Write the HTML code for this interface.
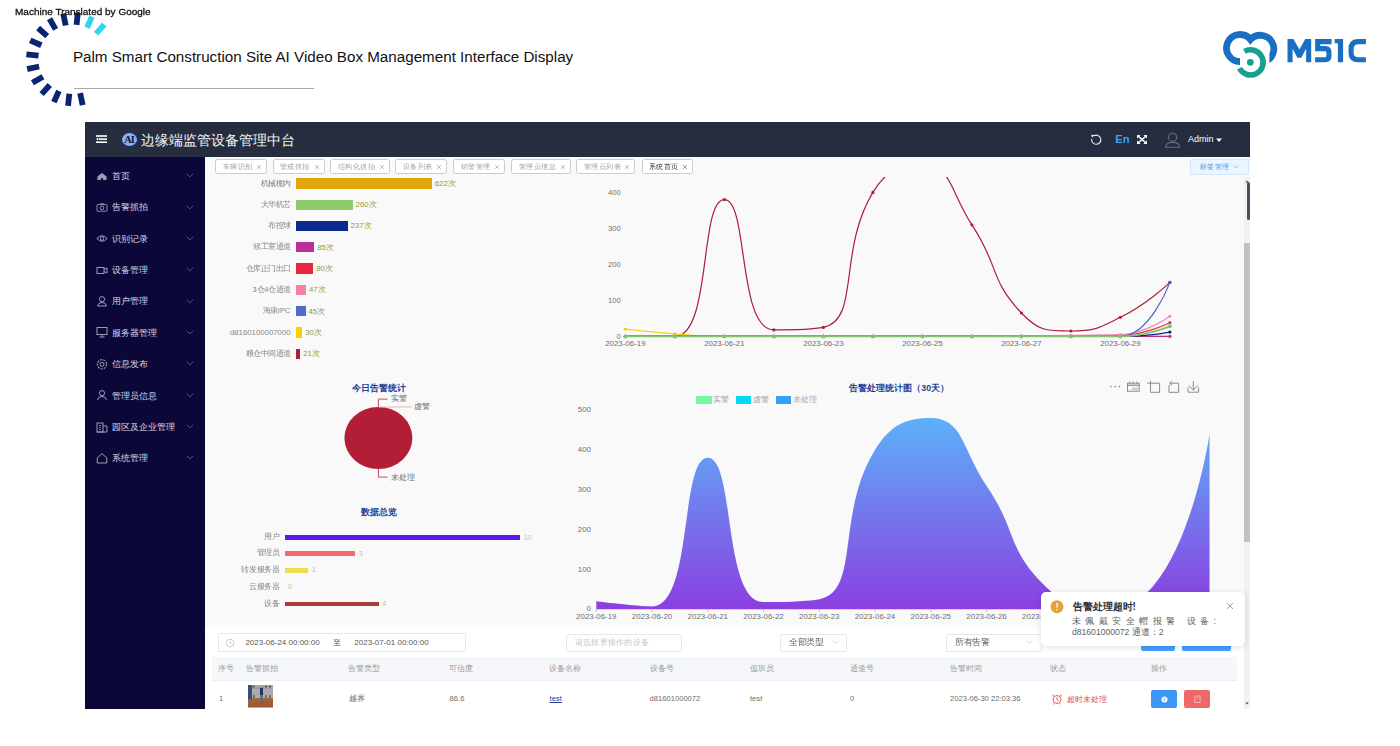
<!DOCTYPE html>
<html><head><meta charset="utf-8"><style>
html,body{margin:0;padding:0;width:1400px;height:746px;overflow:hidden;background:#fff;position:relative}
body{font-family:"Liberation Sans",sans-serif}
.t{position:absolute;white-space:nowrap}
svg{overflow:visible}
</style></head><body>
<div class="t" style="left:72.90px;top:49.13px;font-size:15.2px;line-height:15.2px;color:#111;">Palm Smart Construction Site AI Video Box Management Interface Display</div>
<div style="position:absolute;left:74px;top:88px;width:240px;height:1px;background:#a8a8a8"></div>
<svg style="position:absolute;left:0;top:0" width="140" height="120" viewBox="0 0 140 120"><rect x="-6.10" y="-2.9" width="12.2" height="5.8" fill="#32d4ef" transform="translate(100.16 29.09) rotate(-48)"/><rect x="-6.10" y="-2.9" width="12.2" height="5.8" fill="#32d4ef" transform="translate(89.48 22.16) rotate(-66)"/><rect x="-6.10" y="-2.9" width="12.2" height="5.8" fill="#0a2470" transform="translate(77.18 18.86) rotate(-84)"/><rect x="-6.10" y="-2.9" width="12.2" height="5.8" fill="#0a2470" transform="translate(64.47 19.53) rotate(-102)"/><rect x="-6.10" y="-2.9" width="12.2" height="5.8" fill="#0a2470" transform="translate(52.58 24.09) rotate(-120)"/><rect x="-6.10" y="-2.9" width="12.2" height="5.8" fill="#0a2470" transform="translate(42.68 32.11) rotate(-138)"/><rect x="-6.10" y="-2.9" width="12.2" height="5.8" fill="#0a2470" transform="translate(35.75 42.79) rotate(-156)"/><rect x="-6.10" y="-2.9" width="12.2" height="5.8" fill="#0a2470" transform="translate(32.45 55.09) rotate(-174)"/><rect x="-6.10" y="-2.9" width="12.2" height="5.8" fill="#0a2470" transform="translate(33.12 67.80) rotate(-192)"/><rect x="-6.10" y="-2.9" width="12.2" height="5.8" fill="#0a2470" transform="translate(37.68 79.69) rotate(-210)"/><rect x="-6.10" y="-2.9" width="12.2" height="5.8" fill="#0a2470" transform="translate(45.70 89.59) rotate(-228)"/><rect x="-6.10" y="-2.9" width="12.2" height="5.8" fill="#0a2470" transform="translate(56.38 96.52) rotate(-246)"/><rect x="-6.10" y="-2.9" width="12.2" height="5.8" fill="#0a2470" transform="translate(68.68 99.82) rotate(-264)"/><rect x="-6.10" y="-2.9" width="12.2" height="5.8" fill="#0a2470" transform="translate(81.39 99.15) rotate(-282)"/></svg>
<div class="t" style="left:15.00px;top:6.54px;font-size:10px;line-height:10px;color:#111;-webkit-text-stroke:0.3px #111;transform:scaleY(0.92);transform-origin:0 8.5px;">Machine Translated by Google</div>
<svg style="position:absolute;left:1200px;top:20px" width="200" height="70" viewBox="1200 20 200 70">
<clipPath id="lgc"><path d="M1215 20 L1290 20 L1290 90 L1269.4 90 L1269.4 52 L1245 52 L1245 90 L1215 90 Z"/></clipPath><path clip-path="url(#lgc)" d="M1240 61.5 A13.5 13.5 0 1 1 1250.5 39.5 A13.5 13.5 0 1 1 1265.6 61.2" fill="none" stroke="#1b6fc2" stroke-width="6.8"/>
<path d="M1244.4 51.4 A12.6 12.6 0 1 1 1239.4 68.3" fill="none" stroke="#17a08f" stroke-width="5.6"/>
<circle cx="1250.3" cy="62.3" r="3.4" fill="#17a08f"/>
<path fill="#1b6fc2" d="M1287.5 62.3 L1287.5 39.1 L1293.4 39.1 L1299.4 49.6 L1305.3 39.1 L1311.2 39.1 L1311.2 62.3 L1306.1 62.3 L1306.1 48.8 L1301.3 57.8 L1297.4 57.8 L1292.6 48.8 L1292.6 62.3 Z"/>
<path fill="none" stroke="#1b6fc2" stroke-width="5.1" stroke-linejoin="miter" d="M1331.6 41.65 L1317.7 41.65 L1317.7 50.4 M1315.15 48.6 L1325.2 48.6 Q1328.9 48.6 1328.9 52.3 L1328.9 56.1 Q1328.9 59.75 1325.2 59.75 L1315.1 59.75"/>
<path fill="#1b6fc2" d="M1334.7 39.1 L1343.1 39.1 L1343.1 62.3 L1337.9 62.3 L1337.9 43.2 L1334.7 43.2 Z"/>
<path fill="none" stroke="#1b6fc2" stroke-width="5.1" d="M1365.9 41.65 L1358.3 41.65 Q1351.05 41.65 1351.05 48.9 L1351.05 52.5 Q1351.05 59.75 1358.3 59.75 L1365.9 59.75"/>
</svg>
<div style="position:absolute;left:84.5px;top:122px;width:1165.7px;height:34.69999999999999px;background:#252d3e"></div>
<div style="position:absolute;left:84.5px;top:156.7px;width:120.80000000000001px;height:552.3px;background:#0b0839"></div>
<div style="position:absolute;left:205.3px;top:156.7px;width:1044.9px;height:470.8px;background:#f9f9f9"></div>
<div style="position:absolute;left:205.3px;top:627.5px;width:1044.9px;height:81.5px;background:#fff"></div>
<svg style="position:absolute;left:94px;top:133px" width="16" height="12" viewBox="0 0 16 12"><rect x="2" y="2.2" width="11" height="1.6" fill="#fff"/><rect x="5" y="5.3" width="8" height="1.6" fill="#fff"/><rect x="2" y="8.4" width="11" height="1.6" fill="#fff"/><path d="M2 6.1 L4.3 4.6 L4.3 7.6 Z" fill="#fff"/></svg>
<div style="position:absolute;left:121.1px;top:132.2px;width:15.0px;height:13.0px;border-radius:50%;background:#88aff5;border:0.6px solid #1c2a60"></div>
<div class="t" style="left:121.6px;top:133.6px;width:15px;text-align:center;font-family:'Liberation Serif',serif;font-size:10.4px;line-height:11px;font-weight:bold;color:#0e1838;letter-spacing:-0.9px">AI</div>
<div class="t" style="left:141.20px;top:133.53px;font-size:13.9px;line-height:13.9px;color:#f4f4f4;">边缘端监管设备管理中台</div>
<svg style="position:absolute;left:1089px;top:133px" width="15" height="14" viewBox="0 0 15 14"><path d="M4.9 2.72 A4.6 4.6 0 1 1 2.67 5.9" fill="none" stroke="#f0f0f4" stroke-width="1.1"/><path d="M2.2 1.7 L5.4 1.9 L3.0 4.8 Z" fill="#f0f0f4"/></svg>
<div class="t" style="left:1115.30px;top:133.82px;font-size:11.2px;line-height:11.2px;color:#409eff;font-weight:bold;">En</div>
<svg style="position:absolute;left:1136px;top:134px" width="12" height="11" viewBox="0 0 12 11"><path d="M2 2 L10 9 M10 2 L2 9" stroke="#fff" stroke-width="1.6"/><path d="M1 1 L4.6 1 L1 4.4 Z M11 1 L7.4 1 L11 4.4 Z M1 10 L4.6 10 L1 6.6 Z M11 10 L7.4 10 L11 6.6 Z" fill="#fff"/></svg>
<svg style="position:absolute;left:1164px;top:132px" width="18" height="17" viewBox="0 0 18 17"><circle cx="8.6" cy="5.3" r="4.1" fill="none" stroke="#666d7c" stroke-width="1.1"/><path d="M1.5 15.3 Q2.2 10.4 8.6 10.4 Q15 10.4 15.7 15.3 Z" fill="none" stroke="#666d7c" stroke-width="1.1"/></svg>
<div class="t" style="left:1188.00px;top:134.58px;font-size:9.0px;line-height:9.0px;color:#ffffff;">Admin</div>
<svg style="position:absolute;left:1215px;top:137.5px" width="8" height="5" viewBox="0 0 8 5"><path d="M1 0.5 L7 0.5 L4 4 Z" fill="#fff"/></svg>
<svg style="position:absolute;left:95.5px;top:169.70px" width="12" height="12" viewBox="0 0 12 12"><path d="M1.4 6.6 L6 3.0 L10.6 6.6 L10.6 10.1 L7.1 10.1 L7.1 8.2 L4.9 8.2 L4.9 10.1 L1.4 10.1 Z" fill="#9c9cb2"/></svg>
<div class="t" style="left:111.60px;top:172.05px;font-size:8.8px;line-height:8.8px;color:#d4d4e2;">首页</div>
<svg style="position:absolute;left:185.5px;top:173.20px" width="8" height="5" viewBox="0 0 8 5"><path d="M0.8 0.8 L4 3.8 L7.2 0.8" fill="none" stroke="#6c6c8a" stroke-width="0.75"/></svg>
<svg style="position:absolute;left:95.5px;top:201.05px" width="12" height="12" viewBox="0 0 12 12"><rect x="1" y="3.6" width="10" height="6.6" rx="0.8" fill="none" stroke="#9c9cb2" stroke-width="0.9"/><circle cx="6" cy="6.9" r="1.8" fill="none" stroke="#9c9cb2" stroke-width="0.9"/><rect x="4" y="2.4" width="4" height="1.4" fill="#9c9cb2"/></svg>
<div class="t" style="left:111.60px;top:203.40px;font-size:8.8px;line-height:8.8px;color:#d4d4e2;">告警抓拍</div>
<svg style="position:absolute;left:185.5px;top:204.55px" width="8" height="5" viewBox="0 0 8 5"><path d="M0.8 0.8 L4 3.8 L7.2 0.8" fill="none" stroke="#6c6c8a" stroke-width="0.75"/></svg>
<svg style="position:absolute;left:95.5px;top:232.40px" width="12" height="12" viewBox="0 0 12 12"><path d="M0.8 6.5 Q6 1 11.2 6.5 Q6 12 0.8 6.5 Z" fill="none" stroke="#9c9cb2" stroke-width="1"/><circle cx="6" cy="6.5" r="1.8" fill="none" stroke="#9c9cb2" stroke-width="1"/></svg>
<div class="t" style="left:111.60px;top:234.75px;font-size:8.8px;line-height:8.8px;color:#d4d4e2;">识别记录</div>
<svg style="position:absolute;left:185.5px;top:235.90px" width="8" height="5" viewBox="0 0 8 5"><path d="M0.8 0.8 L4 3.8 L7.2 0.8" fill="none" stroke="#6c6c8a" stroke-width="0.75"/></svg>
<svg style="position:absolute;left:95.5px;top:263.75px" width="12" height="12" viewBox="0 0 12 12"><rect x="1" y="3.5" width="7" height="6" fill="none" stroke="#9c9cb2" stroke-width="1"/><path d="M8 5.5 L11 4 L11 9 L8 7.5" fill="none" stroke="#9c9cb2" stroke-width="1"/></svg>
<div class="t" style="left:111.60px;top:266.10px;font-size:8.8px;line-height:8.8px;color:#d4d4e2;">设备管理</div>
<svg style="position:absolute;left:185.5px;top:267.25px" width="8" height="5" viewBox="0 0 8 5"><path d="M0.8 0.8 L4 3.8 L7.2 0.8" fill="none" stroke="#6c6c8a" stroke-width="0.75"/></svg>
<svg style="position:absolute;left:95.5px;top:295.10px" width="12" height="12" viewBox="0 0 12 12"><circle cx="6" cy="4.2" r="2.6" fill="none" stroke="#9c9cb2" stroke-width="1"/><path d="M1.5 11 Q2 7.5 6 7.5 Q10 7.5 10.5 11 Z" fill="none" stroke="#9c9cb2" stroke-width="1"/></svg>
<div class="t" style="left:111.60px;top:297.45px;font-size:8.8px;line-height:8.8px;color:#d4d4e2;">用户管理</div>
<svg style="position:absolute;left:185.5px;top:298.60px" width="8" height="5" viewBox="0 0 8 5"><path d="M0.8 0.8 L4 3.8 L7.2 0.8" fill="none" stroke="#6c6c8a" stroke-width="0.75"/></svg>
<svg style="position:absolute;left:95.5px;top:326.45px" width="12" height="12" viewBox="0 0 12 12"><rect x="1" y="1.5" width="10" height="7" fill="none" stroke="#9c9cb2" stroke-width="1"/><path d="M6 8.5 L6 11 M3.5 11 L8.5 11" stroke="#9c9cb2" stroke-width="1"/></svg>
<div class="t" style="left:111.60px;top:328.80px;font-size:8.8px;line-height:8.8px;color:#d4d4e2;">服务器管理</div>
<svg style="position:absolute;left:185.5px;top:329.95px" width="8" height="5" viewBox="0 0 8 5"><path d="M0.8 0.8 L4 3.8 L7.2 0.8" fill="none" stroke="#6c6c8a" stroke-width="0.75"/></svg>
<svg style="position:absolute;left:95.5px;top:357.80px" width="12" height="12" viewBox="0 0 12 12"><circle cx="6" cy="6.3" r="2" fill="none" stroke="#9c9cb2" stroke-width="1"/><circle cx="6" cy="6.3" r="4.6" fill="none" stroke="#9c9cb2" stroke-width="1.2" stroke-dasharray="2 1.2"/></svg>
<div class="t" style="left:111.60px;top:360.15px;font-size:8.8px;line-height:8.8px;color:#d4d4e2;">信息发布</div>
<svg style="position:absolute;left:185.5px;top:361.30px" width="8" height="5" viewBox="0 0 8 5"><path d="M0.8 0.8 L4 3.8 L7.2 0.8" fill="none" stroke="#6c6c8a" stroke-width="0.75"/></svg>
<svg style="position:absolute;left:95.5px;top:389.15px" width="12" height="12" viewBox="0 0 12 12"><circle cx="6" cy="4.2" r="2.6" fill="none" stroke="#9c9cb2" stroke-width="1"/><path d="M1.5 11 Q2 7.5 6 7.5 Q10 7.5 10.5 11" fill="none" stroke="#9c9cb2" stroke-width="1"/></svg>
<div class="t" style="left:111.60px;top:391.50px;font-size:8.8px;line-height:8.8px;color:#d4d4e2;">管理员信息</div>
<svg style="position:absolute;left:185.5px;top:392.65px" width="8" height="5" viewBox="0 0 8 5"><path d="M0.8 0.8 L4 3.8 L7.2 0.8" fill="none" stroke="#6c6c8a" stroke-width="0.75"/></svg>
<svg style="position:absolute;left:95.5px;top:420.50px" width="12" height="12" viewBox="0 0 12 12"><rect x="1" y="2" width="6" height="9" fill="none" stroke="#9c9cb2" stroke-width="1"/><path d="M7 5 L11 5 L11 11 L1 11" fill="none" stroke="#9c9cb2" stroke-width="1"/><path d="M3 4.5 L5 4.5 M3 6.5 L5 6.5 M3 8.5 L5 8.5" stroke="#9c9cb2" stroke-width="0.8"/></svg>
<div class="t" style="left:111.60px;top:422.85px;font-size:8.8px;line-height:8.8px;color:#d4d4e2;">园区及企业管理</div>
<svg style="position:absolute;left:185.5px;top:424.00px" width="8" height="5" viewBox="0 0 8 5"><path d="M0.8 0.8 L4 3.8 L7.2 0.8" fill="none" stroke="#6c6c8a" stroke-width="0.75"/></svg>
<svg style="position:absolute;left:95.5px;top:451.85px" width="12" height="12" viewBox="0 0 12 12"><path d="M1.2 6 L6 1.6 L10.8 6 L10.8 11 L1.2 11 Z" fill="none" stroke="#9c9cb2" stroke-width="1"/></svg>
<div class="t" style="left:111.60px;top:454.20px;font-size:8.8px;line-height:8.8px;color:#d4d4e2;">系统管理</div>
<svg style="position:absolute;left:185.5px;top:455.35px" width="8" height="5" viewBox="0 0 8 5"><path d="M0.8 0.8 L4 3.8 L7.2 0.8" fill="none" stroke="#6c6c8a" stroke-width="0.75"/></svg>
<div style="position:absolute;left:214.8px;top:159.2px;width:50.2px;height:12.6px;border:0.8px solid #c9ccd2;border-radius:2.5px;background:#fff"></div>
<div class="t" style="left:222.60px;top:163.13px;font-size:8px;line-height:8px;color:#a0a0a0;transform:scale(0.93);transform-origin:0 6.77px;">车辆识别</div>
<svg style="position:absolute;left:256.1px;top:163.5px" width="6" height="6" viewBox="0 0 6 6"><path d="M1 1 L5 5 M5 1 L1 5" stroke="#999" stroke-width="0.6"/></svg>
<div style="position:absolute;left:272.5px;top:159.2px;width:50.2px;height:12.6px;border:0.8px solid #c9ccd2;border-radius:2.5px;background:#fff"></div>
<div class="t" style="left:280.30px;top:163.13px;font-size:8px;line-height:8px;color:#a0a0a0;transform:scale(0.93);transform-origin:0 6.77px;">警戒抓拍</div>
<svg style="position:absolute;left:313.8px;top:163.5px" width="6" height="6" viewBox="0 0 6 6"><path d="M1 1 L5 5 M5 1 L1 5" stroke="#999" stroke-width="0.6"/></svg>
<div style="position:absolute;left:330.4px;top:159.2px;width:57.3px;height:12.6px;border:0.8px solid #c9ccd2;border-radius:2.5px;background:#fff"></div>
<div class="t" style="left:338.20px;top:163.13px;font-size:8px;line-height:8px;color:#a0a0a0;transform:scale(0.93);transform-origin:0 6.77px;">结构化抓拍</div>
<svg style="position:absolute;left:378.8px;top:163.5px" width="6" height="6" viewBox="0 0 6 6"><path d="M1 1 L5 5 M5 1 L1 5" stroke="#999" stroke-width="0.6"/></svg>
<div style="position:absolute;left:395.4px;top:159.2px;width:49.4px;height:12.6px;border:0.8px solid #c9ccd2;border-radius:2.5px;background:#fff"></div>
<div class="t" style="left:403.20px;top:163.13px;font-size:8px;line-height:8px;color:#a0a0a0;transform:scale(0.93);transform-origin:0 6.77px;">设备列表</div>
<svg style="position:absolute;left:435.9px;top:163.5px" width="6" height="6" viewBox="0 0 6 6"><path d="M1 1 L5 5 M5 1 L1 5" stroke="#999" stroke-width="0.6"/></svg>
<div style="position:absolute;left:453.4px;top:159.2px;width:49.4px;height:12.6px;border:0.8px solid #c9ccd2;border-radius:2.5px;background:#fff"></div>
<div class="t" style="left:461.20px;top:163.13px;font-size:8px;line-height:8px;color:#a0a0a0;transform:scale(0.93);transform-origin:0 6.77px;">销警管理</div>
<svg style="position:absolute;left:493.9px;top:163.5px" width="6" height="6" viewBox="0 0 6 6"><path d="M1 1 L5 5 M5 1 L1 5" stroke="#999" stroke-width="0.6"/></svg>
<div style="position:absolute;left:511.3px;top:159.2px;width:57.4px;height:12.6px;border:0.8px solid #c9ccd2;border-radius:2.5px;background:#fff"></div>
<div class="t" style="left:519.10px;top:163.13px;font-size:8px;line-height:8px;color:#a0a0a0;transform:scale(0.93);transform-origin:0 6.77px;">管理员信息</div>
<svg style="position:absolute;left:559.8px;top:163.5px" width="6" height="6" viewBox="0 0 6 6"><path d="M1 1 L5 5 M5 1 L1 5" stroke="#999" stroke-width="0.6"/></svg>
<div style="position:absolute;left:576.3px;top:159.2px;width:56.9px;height:12.6px;border:0.8px solid #c9ccd2;border-radius:2.5px;background:#fff"></div>
<div class="t" style="left:584.10px;top:163.13px;font-size:8px;line-height:8px;color:#a0a0a0;transform:scale(0.93);transform-origin:0 6.77px;">管理员列表</div>
<svg style="position:absolute;left:624.3px;top:163.5px" width="6" height="6" viewBox="0 0 6 6"><path d="M1 1 L5 5 M5 1 L1 5" stroke="#999" stroke-width="0.6"/></svg>
<div style="position:absolute;left:641.5px;top:159.2px;width:49.8px;height:12.6px;border:0.8px solid #c9ccd2;border-radius:2.5px;background:#fff"></div>
<div class="t" style="left:649.30px;top:163.13px;font-size:8px;line-height:8px;color:#303030;transform:scale(0.93);transform-origin:0 6.77px;">系统首页</div>
<svg style="position:absolute;left:682.4px;top:163.5px" width="6" height="6" viewBox="0 0 6 6"><path d="M1 1 L5 5 M5 1 L1 5" stroke="#555" stroke-width="0.6"/></svg>
<div style="position:absolute;left:1189.6px;top:159.4px;width:57.8px;height:13.6px;border:0.8px solid #d4e6fa;border-radius:2px;background:#ecf5ff"></div>
<div class="t" style="left:1199.60px;top:162.83px;font-size:8px;line-height:8px;color:#4a9ae8;transform:scale(0.93);transform-origin:0 6.77px;">标签管理</div>
<svg style="position:absolute;left:1233.2px;top:165px" width="6" height="4" viewBox="0 0 6 4"><path d="M0.4 0.5 L3 2.9 L5.6 0.5" fill="none" stroke="#6aaaf0" stroke-width="0.6"/></svg>
<div style="position:absolute;left:295.9px;top:178.20px;width:136.03px;height:10.4px;background:#dfa50b"></div>
<div class="t" style="right:1109.40px;top:179.53px;font-size:8px;line-height:8px;color:#868686;transform:scale(0.94);transform-origin:100% 6.77px;">机械棚内</div>
<div class="t" style="left:434.73px;top:179.70px;font-size:7.8px;line-height:7.8px;color:#8c9a3c;">622次</div>
<div style="position:absolute;left:295.9px;top:199.50px;width:56.86px;height:10.4px;background:#8ecb6c"></div>
<div class="t" style="right:1109.40px;top:200.83px;font-size:8px;line-height:8px;color:#868686;transform:scale(0.94);transform-origin:100% 6.77px;">大华机芯</div>
<div class="t" style="left:355.56px;top:201.00px;font-size:7.8px;line-height:7.8px;color:#8c9a3c;">260次</div>
<div style="position:absolute;left:295.9px;top:220.80px;width:51.83px;height:10.4px;background:#0a2a8e"></div>
<div class="t" style="right:1109.40px;top:222.13px;font-size:8px;line-height:8px;color:#868686;transform:scale(0.94);transform-origin:100% 6.77px;">布控球</div>
<div class="t" style="left:350.53px;top:222.30px;font-size:7.8px;line-height:7.8px;color:#8c9a3c;">237次</div>
<div style="position:absolute;left:295.9px;top:242.10px;width:18.59px;height:10.4px;background:#bd2f98"></div>
<div class="t" style="right:1109.40px;top:243.43px;font-size:8px;line-height:8px;color:#868686;transform:scale(0.94);transform-origin:100% 6.77px;">候工室通道</div>
<div class="t" style="left:317.29px;top:243.60px;font-size:7.8px;line-height:7.8px;color:#8c9a3c;">85次</div>
<div style="position:absolute;left:295.9px;top:263.40px;width:17.50px;height:10.4px;background:#e6263e"></div>
<div class="t" style="right:1109.40px;top:264.73px;font-size:8px;line-height:8px;color:#868686;transform:scale(0.94);transform-origin:100% 6.77px;">仓库正门出口</div>
<div class="t" style="left:316.20px;top:264.90px;font-size:7.8px;line-height:7.8px;color:#8c9a3c;">80次</div>
<div style="position:absolute;left:295.9px;top:284.70px;width:10.28px;height:10.4px;background:#f283a4"></div>
<div class="t" style="right:1109.40px;top:286.03px;font-size:8px;line-height:8px;color:#868686;transform:scale(0.94);transform-origin:100% 6.77px;">3仓4仓通道</div>
<div class="t" style="left:308.98px;top:286.20px;font-size:7.8px;line-height:7.8px;color:#8c9a3c;">47次</div>
<div style="position:absolute;left:295.9px;top:306.00px;width:9.84px;height:10.4px;background:#4f6dc6"></div>
<div class="t" style="right:1109.40px;top:307.33px;font-size:8px;line-height:8px;color:#868686;transform:scale(0.94);transform-origin:100% 6.77px;">海康IPC</div>
<div class="t" style="left:308.54px;top:307.50px;font-size:7.8px;line-height:7.8px;color:#8c9a3c;">45次</div>
<div style="position:absolute;left:295.9px;top:327.30px;width:6.56px;height:10.4px;background:#f6d200"></div>
<div class="t" style="right:1109.40px;top:328.80px;font-size:7.8px;line-height:7.8px;color:#868686;">d8160100007000</div>
<div class="t" style="left:305.26px;top:328.80px;font-size:7.8px;line-height:7.8px;color:#8c9a3c;">30次</div>
<div style="position:absolute;left:295.9px;top:348.60px;width:4.59px;height:10.4px;background:#ae1f3a"></div>
<div class="t" style="right:1109.40px;top:349.93px;font-size:8px;line-height:8px;color:#868686;transform:scale(0.94);transform-origin:100% 6.77px;">粮仓中间通道</div>
<div class="t" style="left:303.29px;top:350.10px;font-size:7.8px;line-height:7.8px;color:#8c9a3c;">21次</div>
<svg style="position:absolute;left:0;top:0" width="1400" height="746" viewBox="0 0 1400 746"><defs><clipPath id="lc"><rect x="590" y="177" width="650" height="180"/></clipPath></defs><g clip-path="url(#lc)"><path d="M625.40 336.40 C625.40 336.40 662.33 336.40 674.90 336.40 C711.83 336.40 699.12 199.60 724.40 199.60 C748.62 199.60 737.38 329.92 773.90 329.92 C786.88 329.92 810.71 329.92 823.40 327.40 C860.21 320.09 837.50 250.97 872.90 192.40 C887.00 169.07 901.55 163.60 922.40 163.60 C951.05 163.60 950.24 192.11 971.90 224.80 C999.74 266.81 988.85 278.44 1021.40 313.00 C1038.35 331.00 1045.84 331.00 1070.90 331.00 C1095.34 331.00 1097.69 328.47 1120.40 317.32 C1147.19 304.17 1169.90 282.40 1169.90 282.40" fill="none" stroke="#ae1d37" stroke-width="1.2"/><circle cx="625.40" cy="336.40" r="1.6" fill="#ae1d37"/><circle cx="674.90" cy="336.40" r="1.6" fill="#ae1d37"/><circle cx="724.40" cy="199.60" r="1.6" fill="#ae1d37"/><circle cx="773.90" cy="329.92" r="1.6" fill="#ae1d37"/><circle cx="823.40" cy="327.40" r="1.6" fill="#ae1d37"/><circle cx="872.90" cy="192.40" r="1.6" fill="#ae1d37"/><circle cx="922.40" cy="163.60" r="1.6" fill="#ae1d37"/><circle cx="971.90" cy="224.80" r="1.6" fill="#ae1d37"/><circle cx="1021.40" cy="313.00" r="1.6" fill="#ae1d37"/><circle cx="1070.90" cy="331.00" r="1.6" fill="#ae1d37"/><circle cx="1120.40" cy="317.32" r="1.6" fill="#ae1d37"/><circle cx="1169.90" cy="282.40" r="1.6" fill="#ae1d37"/><path d="M625.40 329.20 C625.40 329.20 650.11 332.08 674.90 333.88 C699.61 335.68 699.63 336.40 724.40 336.40 C749.13 336.40 749.15 336.40 773.90 336.40 C798.65 336.40 798.65 336.40 823.40 336.40 C848.15 336.40 848.15 336.40 872.90 336.40 C897.65 336.40 897.65 336.40 922.40 336.40 C947.15 336.40 947.15 336.40 971.90 336.40 C996.65 336.40 996.65 336.40 1021.40 336.40 C1046.15 336.40 1046.15 336.40 1070.90 336.40 C1095.65 336.40 1095.65 336.40 1120.40 336.40 C1145.15 336.40 1169.90 336.40 1169.90 336.40" fill="none" stroke="#f2d21c" stroke-width="1.2"/><circle cx="625.40" cy="329.20" r="1.6" fill="#f2d21c"/><circle cx="674.90" cy="333.88" r="1.6" fill="#f2d21c"/><circle cx="724.40" cy="336.40" r="1.6" fill="#f2d21c"/><circle cx="773.90" cy="336.40" r="1.6" fill="#f2d21c"/><circle cx="823.40" cy="336.40" r="1.6" fill="#f2d21c"/><circle cx="872.90" cy="336.40" r="1.6" fill="#f2d21c"/><circle cx="922.40" cy="336.40" r="1.6" fill="#f2d21c"/><circle cx="971.90" cy="336.40" r="1.6" fill="#f2d21c"/><circle cx="1021.40" cy="336.40" r="1.6" fill="#f2d21c"/><circle cx="1070.90" cy="336.40" r="1.6" fill="#f2d21c"/><circle cx="1120.40" cy="336.40" r="1.6" fill="#f2d21c"/><circle cx="1169.90" cy="336.40" r="1.6" fill="#f2d21c"/><path d="M625.40 336.40 C625.40 336.40 650.15 336.40 674.90 336.40 C699.65 336.40 699.65 336.40 724.40 336.40 C749.15 336.40 749.15 336.40 773.90 336.40 C798.65 336.40 798.65 336.40 823.40 336.40 C848.15 336.40 848.15 336.40 872.90 336.40 C897.65 336.40 897.65 336.40 922.40 336.40 C947.15 336.40 947.15 336.40 971.90 336.40 C996.65 336.40 996.65 336.40 1021.40 336.40 C1046.15 336.40 1046.15 336.40 1070.90 336.40 C1095.65 336.40 1095.65 336.40 1120.40 336.40 C1145.15 336.40 1169.90 336.40 1169.90 336.40" fill="none" stroke="#be2f7a" stroke-width="1.2"/><circle cx="625.40" cy="336.40" r="1.6" fill="#be2f7a"/><circle cx="674.90" cy="336.40" r="1.6" fill="#be2f7a"/><circle cx="724.40" cy="336.40" r="1.6" fill="#be2f7a"/><circle cx="773.90" cy="336.40" r="1.6" fill="#be2f7a"/><circle cx="823.40" cy="336.40" r="1.6" fill="#be2f7a"/><circle cx="872.90" cy="336.40" r="1.6" fill="#be2f7a"/><circle cx="922.40" cy="336.40" r="1.6" fill="#be2f7a"/><circle cx="971.90" cy="336.40" r="1.6" fill="#be2f7a"/><circle cx="1021.40" cy="336.40" r="1.6" fill="#be2f7a"/><circle cx="1070.90" cy="336.40" r="1.6" fill="#be2f7a"/><circle cx="1120.40" cy="336.40" r="1.6" fill="#be2f7a"/><circle cx="1169.90" cy="336.40" r="1.6" fill="#be2f7a"/><path d="M625.40 336.40 C625.40 336.40 650.15 336.40 674.90 336.40 C699.65 336.40 699.65 336.40 724.40 336.40 C749.15 336.40 749.15 336.40 773.90 336.40 C798.65 336.40 798.65 336.40 823.40 336.40 C848.15 336.40 848.15 336.40 872.90 336.40 C897.65 336.40 897.65 336.40 922.40 336.40 C947.15 336.40 947.15 336.40 971.90 336.40 C996.65 336.40 996.65 336.40 1021.40 336.40 C1046.15 336.40 1046.15 336.40 1070.90 336.40 C1095.65 336.40 1095.70 336.40 1120.40 336.40 C1145.20 336.40 1169.90 332.08 1169.90 332.08" fill="none" stroke="#0d2185" stroke-width="1.2"/><circle cx="625.40" cy="336.40" r="1.6" fill="#0d2185"/><circle cx="674.90" cy="336.40" r="1.6" fill="#0d2185"/><circle cx="724.40" cy="336.40" r="1.6" fill="#0d2185"/><circle cx="773.90" cy="336.40" r="1.6" fill="#0d2185"/><circle cx="823.40" cy="336.40" r="1.6" fill="#0d2185"/><circle cx="872.90" cy="336.40" r="1.6" fill="#0d2185"/><circle cx="922.40" cy="336.40" r="1.6" fill="#0d2185"/><circle cx="971.90" cy="336.40" r="1.6" fill="#0d2185"/><circle cx="1021.40" cy="336.40" r="1.6" fill="#0d2185"/><circle cx="1070.90" cy="336.40" r="1.6" fill="#0d2185"/><circle cx="1120.40" cy="336.40" r="1.6" fill="#0d2185"/><circle cx="1169.90" cy="332.08" r="1.6" fill="#0d2185"/><path d="M625.40 336.40 C625.40 336.40 650.15 336.40 674.90 336.40 C699.65 336.40 699.65 336.40 724.40 336.40 C749.15 336.40 749.15 336.40 773.90 336.40 C798.65 336.40 798.65 336.40 823.40 336.40 C848.15 336.40 848.15 336.40 872.90 336.40 C897.65 336.40 897.65 336.40 922.40 336.40 C947.15 336.40 947.15 336.40 971.90 336.40 C996.65 336.40 996.65 336.22 1021.40 336.04 C1046.15 335.86 1046.15 335.86 1070.90 335.68 C1095.65 335.50 1096.04 335.68 1120.40 335.32 C1145.54 334.95 1169.90 322.72 1169.90 322.72" fill="none" stroke="#e6364a" stroke-width="1.2"/><circle cx="625.40" cy="336.40" r="1.6" fill="#e6364a"/><circle cx="674.90" cy="336.40" r="1.6" fill="#e6364a"/><circle cx="724.40" cy="336.40" r="1.6" fill="#e6364a"/><circle cx="773.90" cy="336.40" r="1.6" fill="#e6364a"/><circle cx="823.40" cy="336.40" r="1.6" fill="#e6364a"/><circle cx="872.90" cy="336.40" r="1.6" fill="#e6364a"/><circle cx="922.40" cy="336.40" r="1.6" fill="#e6364a"/><circle cx="971.90" cy="336.40" r="1.6" fill="#e6364a"/><circle cx="1021.40" cy="336.04" r="1.6" fill="#e6364a"/><circle cx="1070.90" cy="335.68" r="1.6" fill="#e6364a"/><circle cx="1120.40" cy="335.32" r="1.6" fill="#e6364a"/><circle cx="1169.90" cy="322.72" r="1.6" fill="#e6364a"/><path d="M625.40 336.40 C625.40 336.40 650.15 336.40 674.90 336.40 C699.65 336.40 699.65 336.40 724.40 336.40 C749.15 336.40 749.15 336.40 773.90 336.40 C798.65 336.40 798.65 336.40 823.40 336.40 C848.15 336.40 848.15 336.40 872.90 336.40 C897.65 336.40 897.65 336.40 922.40 336.40 C947.15 336.40 947.15 336.40 971.90 336.40 C996.65 336.40 996.65 336.31 1021.40 336.04 C1046.15 335.77 1046.15 335.68 1070.90 335.32 C1095.65 334.96 1096.45 335.32 1120.40 334.60 C1145.95 333.83 1169.90 316.24 1169.90 316.24" fill="none" stroke="#f28fae" stroke-width="1.2"/><circle cx="625.40" cy="336.40" r="1.6" fill="#f28fae"/><circle cx="674.90" cy="336.40" r="1.6" fill="#f28fae"/><circle cx="724.40" cy="336.40" r="1.6" fill="#f28fae"/><circle cx="773.90" cy="336.40" r="1.6" fill="#f28fae"/><circle cx="823.40" cy="336.40" r="1.6" fill="#f28fae"/><circle cx="872.90" cy="336.40" r="1.6" fill="#f28fae"/><circle cx="922.40" cy="336.40" r="1.6" fill="#f28fae"/><circle cx="971.90" cy="336.40" r="1.6" fill="#f28fae"/><circle cx="1021.40" cy="336.04" r="1.6" fill="#f28fae"/><circle cx="1070.90" cy="335.32" r="1.6" fill="#f28fae"/><circle cx="1120.40" cy="334.60" r="1.6" fill="#f28fae"/><circle cx="1169.90" cy="316.24" r="1.6" fill="#f28fae"/><path d="M625.40 336.40 C625.40 336.40 650.15 336.40 674.90 336.40 C699.65 336.40 699.65 336.40 724.40 336.40 C749.15 336.40 749.15 336.40 773.90 336.40 C798.65 336.40 798.65 336.40 823.40 336.40 C848.15 336.40 848.15 336.40 872.90 336.40 C897.65 336.40 897.65 336.40 922.40 336.40 C947.15 336.40 947.15 336.40 971.90 336.40 C996.65 336.40 996.65 336.40 1021.40 336.40 C1046.15 336.40 1046.15 336.40 1070.90 336.40 C1095.65 336.40 1100.44 336.40 1120.40 336.40 C1149.94 336.40 1169.90 282.40 1169.90 282.40" fill="none" stroke="#4c64c8" stroke-width="1.2"/><circle cx="625.40" cy="336.40" r="1.6" fill="#4c64c8"/><circle cx="674.90" cy="336.40" r="1.6" fill="#4c64c8"/><circle cx="724.40" cy="336.40" r="1.6" fill="#4c64c8"/><circle cx="773.90" cy="336.40" r="1.6" fill="#4c64c8"/><circle cx="823.40" cy="336.40" r="1.6" fill="#4c64c8"/><circle cx="872.90" cy="336.40" r="1.6" fill="#4c64c8"/><circle cx="922.40" cy="336.40" r="1.6" fill="#4c64c8"/><circle cx="971.90" cy="336.40" r="1.6" fill="#4c64c8"/><circle cx="1021.40" cy="336.40" r="1.6" fill="#4c64c8"/><circle cx="1070.90" cy="336.40" r="1.6" fill="#4c64c8"/><circle cx="1120.40" cy="336.40" r="1.6" fill="#4c64c8"/><circle cx="1169.90" cy="282.40" r="1.6" fill="#4c64c8"/><path d="M625.40 336.40 C625.40 336.40 650.15 336.40 674.90 336.40 C699.65 336.40 699.65 336.40 724.40 336.40 C749.15 336.40 749.15 336.40 773.90 336.40 C798.65 336.40 798.65 336.40 823.40 336.40 C848.15 336.40 848.15 336.40 872.90 336.40 C897.65 336.40 897.65 336.40 922.40 336.40 C947.15 336.40 947.15 336.40 971.90 336.40 C996.65 336.40 996.65 336.40 1021.40 336.40 C1046.15 336.40 1046.15 336.40 1070.90 336.40 C1095.65 336.40 1095.90 336.40 1120.40 336.40 C1145.40 336.40 1169.90 326.32 1169.90 326.32" fill="none" stroke="#86c272" stroke-width="1.8"/><circle cx="625.40" cy="336.40" r="2.0" fill="#86c272"/><circle cx="674.90" cy="336.40" r="2.0" fill="#86c272"/><circle cx="724.40" cy="336.40" r="2.0" fill="#86c272"/><circle cx="773.90" cy="336.40" r="2.0" fill="#86c272"/><circle cx="823.40" cy="336.40" r="2.0" fill="#86c272"/><circle cx="872.90" cy="336.40" r="2.0" fill="#86c272"/><circle cx="922.40" cy="336.40" r="2.0" fill="#86c272"/><circle cx="971.90" cy="336.40" r="2.0" fill="#86c272"/><circle cx="1021.40" cy="336.40" r="2.0" fill="#86c272"/><circle cx="1070.90" cy="336.40" r="2.0" fill="#86c272"/><circle cx="1120.40" cy="336.40" r="2.0" fill="#86c272"/><circle cx="1169.90" cy="326.32" r="2.0" fill="#86c272"/></g></svg>
<div class="t" style="right:779.40px;top:332.67px;font-size:7.6px;line-height:7.6px;color:#6e6e6e;">0</div>
<div class="t" style="right:779.40px;top:296.67px;font-size:7.6px;line-height:7.6px;color:#6e6e6e;">100</div>
<div class="t" style="right:779.40px;top:260.67px;font-size:7.6px;line-height:7.6px;color:#6e6e6e;">200</div>
<div class="t" style="right:779.40px;top:224.67px;font-size:7.6px;line-height:7.6px;color:#6e6e6e;">300</div>
<div class="t" style="right:779.40px;top:188.67px;font-size:7.6px;line-height:7.6px;color:#6e6e6e;">400</div>
<div class="t" style="left:625.40px;top:340.31px;font-size:7.9px;line-height:7.9px;color:#6e6e6e;transform:translateX(-50%);transform-origin:50% 6.69px;">2023-06-19</div>
<div class="t" style="left:724.40px;top:340.31px;font-size:7.9px;line-height:7.9px;color:#6e6e6e;transform:translateX(-50%);transform-origin:50% 6.69px;">2023-06-21</div>
<div class="t" style="left:823.40px;top:340.31px;font-size:7.9px;line-height:7.9px;color:#6e6e6e;transform:translateX(-50%);transform-origin:50% 6.69px;">2023-06-23</div>
<div class="t" style="left:922.40px;top:340.31px;font-size:7.9px;line-height:7.9px;color:#6e6e6e;transform:translateX(-50%);transform-origin:50% 6.69px;">2023-06-25</div>
<div class="t" style="left:1021.40px;top:340.31px;font-size:7.9px;line-height:7.9px;color:#6e6e6e;transform:translateX(-50%);transform-origin:50% 6.69px;">2023-06-27</div>
<div class="t" style="left:1120.40px;top:340.31px;font-size:7.9px;line-height:7.9px;color:#6e6e6e;transform:translateX(-50%);transform-origin:50% 6.69px;">2023-06-29</div>
<div class="t" style="left:352.30px;top:384.14px;font-size:8.7px;line-height:8.7px;color:#1b3d96;font-weight:bold;">今日告警统计</div>
<svg style="position:absolute;left:0;top:0" width="1400" height="746" viewBox="0 0 1400 746"><ellipse cx="378.4" cy="438" rx="34" ry="31" fill="#b11e35"/><path d="M378.4 407.2 L378.4 399.1 L387.5 399.1" fill="none" stroke="#b11e35" stroke-width="0.8"/><path d="M378.4 407.1 L411.5 406.9" fill="none" stroke="#e89aa6" stroke-width="0.8"/><path d="M378.4 469 L378.4 477.1 L387.5 477.1" fill="none" stroke="#b11e35" stroke-width="0.8"/></svg>
<div class="t" style="left:390.60px;top:395.20px;font-size:7.8px;line-height:7.8px;color:#6e6e6e;">实警</div>
<div class="t" style="left:413.60px;top:403.00px;font-size:7.8px;line-height:7.8px;color:#6e6e6e;">虚警</div>
<div class="t" style="left:390.60px;top:473.70px;font-size:7.8px;line-height:7.8px;color:#6e6e6e;">未处理</div>
<div class="t" style="left:361.10px;top:508.42px;font-size:8.6px;line-height:8.6px;color:#1b3d96;font-weight:bold;">数据总览</div>
<div style="position:absolute;left:284.9px;top:535.10px;width:235.30px;height:4.8px;background:#5b19ef"></div>
<div class="t" style="right:1120.40px;top:533.33px;font-size:8px;line-height:8px;color:#858585;transform:scale(0.97);transform-origin:100% 6.77px;">用户</div>
<div class="t" style="left:523.40px;top:533.54px;font-size:7.4px;line-height:7.4px;color:#c7c79e;">10</div>
<div style="position:absolute;left:284.9px;top:551.20px;width:70.59px;height:4.8px;background:#f26a6a"></div>
<div class="t" style="right:1120.40px;top:549.43px;font-size:8px;line-height:8px;color:#858585;transform:scale(0.97);transform-origin:100% 6.77px;">管理员</div>
<div class="t" style="left:358.69px;top:549.64px;font-size:7.4px;line-height:7.4px;color:#c7c79e;">3</div>
<div style="position:absolute;left:284.9px;top:567.90px;width:23.53px;height:4.8px;background:#efdd4f"></div>
<div class="t" style="right:1120.40px;top:566.13px;font-size:8px;line-height:8px;color:#858585;transform:scale(0.97);transform-origin:100% 6.77px;">转发服务器</div>
<div class="t" style="left:311.63px;top:566.34px;font-size:7.4px;line-height:7.4px;color:#c7c79e;">1</div>
<div class="t" style="right:1120.40px;top:582.63px;font-size:8px;line-height:8px;color:#858585;transform:scale(0.97);transform-origin:100% 6.77px;">云服务器</div>
<div class="t" style="left:288.10px;top:582.84px;font-size:7.4px;line-height:7.4px;color:#c7c79e;">0</div>
<div style="position:absolute;left:284.9px;top:601.70px;width:94.12px;height:4.8px;background:#a93a3a"></div>
<div class="t" style="right:1120.40px;top:599.93px;font-size:8px;line-height:8px;color:#858585;transform:scale(0.97);transform-origin:100% 6.77px;">设备</div>
<div class="t" style="left:382.22px;top:600.14px;font-size:7.4px;line-height:7.4px;color:#c7c79e;">4</div>
<svg style="position:absolute;left:0;top:0" width="1400" height="746" viewBox="0 0 1400 746"><defs><linearGradient id="ag" x1="0" y1="409" x2="0" y2="609" gradientUnits="userSpaceOnUse"><stop offset="0" stop-color="#5ab6fb"/><stop offset="1" stop-color="#8b3fe0"/></linearGradient></defs><path d="M596.30 601.23 C596.30 601.23 637.51 606.41 652.05 606.41 C693.26 606.41 679.56 457.81 707.80 457.81 C735.31 457.81 722.59 602.03 763.55 602.03 C778.34 602.03 804.84 602.03 819.30 599.24 C860.59 591.27 835.31 514.45 875.05 449.84 C891.06 423.82 907.24 417.97 930.80 417.97 C962.99 417.97 962.11 449.46 986.55 485.70 C1017.86 532.13 1005.78 545.48 1042.30 583.30 C1061.53 603.22 1070.02 603.22 1098.05 603.22 C1125.77 603.22 1138.95 603.22 1153.80 585.30 C1194.70 535.91 1209.55 433.90 1209.55 433.90 L1209.55 609.20 L596.30 609.20 Z" fill="url(#ag)"/><path d="M596.30 609.20 L596.30 612.20" stroke="#b8b8b8" stroke-width="0.8"/><path d="M652.05 609.20 L652.05 612.20" stroke="#b8b8b8" stroke-width="0.8"/><path d="M707.80 609.20 L707.80 612.20" stroke="#b8b8b8" stroke-width="0.8"/><path d="M763.55 609.20 L763.55 612.20" stroke="#b8b8b8" stroke-width="0.8"/><path d="M819.30 609.20 L819.30 612.20" stroke="#b8b8b8" stroke-width="0.8"/><path d="M875.05 609.20 L875.05 612.20" stroke="#b8b8b8" stroke-width="0.8"/><path d="M930.80 609.20 L930.80 612.20" stroke="#b8b8b8" stroke-width="0.8"/><path d="M986.55 609.20 L986.55 612.20" stroke="#b8b8b8" stroke-width="0.8"/><path d="M1042.30 609.20 L1042.30 612.20" stroke="#b8b8b8" stroke-width="0.8"/><path d="M1098.05 609.20 L1098.05 612.20" stroke="#b8b8b8" stroke-width="0.8"/><path d="M1153.80 609.20 L1153.80 612.20" stroke="#b8b8b8" stroke-width="0.8"/><path d="M1209.55 609.20 L1209.55 612.20" stroke="#b8b8b8" stroke-width="0.8"/></svg>
<div class="t" style="right:809.20px;top:605.40px;font-size:7.8px;line-height:7.8px;color:#6e6e6e;">0</div>
<div class="t" style="right:809.20px;top:565.56px;font-size:7.8px;line-height:7.8px;color:#6e6e6e;">100</div>
<div class="t" style="right:809.20px;top:525.72px;font-size:7.8px;line-height:7.8px;color:#6e6e6e;">200</div>
<div class="t" style="right:809.20px;top:485.88px;font-size:7.8px;line-height:7.8px;color:#6e6e6e;">300</div>
<div class="t" style="right:809.20px;top:446.04px;font-size:7.8px;line-height:7.8px;color:#6e6e6e;">400</div>
<div class="t" style="right:809.20px;top:406.20px;font-size:7.8px;line-height:7.8px;color:#6e6e6e;">500</div>
<div class="t" style="left:596.30px;top:612.91px;font-size:7.9px;line-height:7.9px;color:#6e6e6e;transform:translateX(-50%);transform-origin:50% 6.69px;">2023-06-19</div>
<div class="t" style="left:652.05px;top:612.91px;font-size:7.9px;line-height:7.9px;color:#6e6e6e;transform:translateX(-50%);transform-origin:50% 6.69px;">2023-06-20</div>
<div class="t" style="left:707.80px;top:612.91px;font-size:7.9px;line-height:7.9px;color:#6e6e6e;transform:translateX(-50%);transform-origin:50% 6.69px;">2023-06-21</div>
<div class="t" style="left:763.55px;top:612.91px;font-size:7.9px;line-height:7.9px;color:#6e6e6e;transform:translateX(-50%);transform-origin:50% 6.69px;">2023-06-22</div>
<div class="t" style="left:819.30px;top:612.91px;font-size:7.9px;line-height:7.9px;color:#6e6e6e;transform:translateX(-50%);transform-origin:50% 6.69px;">2023-06-23</div>
<div class="t" style="left:875.05px;top:612.91px;font-size:7.9px;line-height:7.9px;color:#6e6e6e;transform:translateX(-50%);transform-origin:50% 6.69px;">2023-06-24</div>
<div class="t" style="left:930.80px;top:612.91px;font-size:7.9px;line-height:7.9px;color:#6e6e6e;transform:translateX(-50%);transform-origin:50% 6.69px;">2023-06-25</div>
<div class="t" style="left:986.55px;top:612.91px;font-size:7.9px;line-height:7.9px;color:#6e6e6e;transform:translateX(-50%);transform-origin:50% 6.69px;">2023-06-26</div>
<div class="t" style="left:1042.30px;top:612.91px;font-size:7.9px;line-height:7.9px;color:#6e6e6e;transform:translateX(-50%);transform-origin:50% 6.69px;">2023-06-27</div>
<div class="t" style="left:1098.05px;top:612.91px;font-size:7.9px;line-height:7.9px;color:#6e6e6e;transform:translateX(-50%);transform-origin:50% 6.69px;">2023-06-28</div>
<div class="t" style="left:1153.80px;top:612.91px;font-size:7.9px;line-height:7.9px;color:#6e6e6e;transform:translateX(-50%);transform-origin:50% 6.69px;">2023-06-29</div>
<div class="t" style="left:1209.55px;top:612.91px;font-size:7.9px;line-height:7.9px;color:#6e6e6e;transform:translateX(-50%);transform-origin:50% 6.69px;">2023-06-30</div>
<div class="t" style="left:849.30px;top:384.24px;font-size:8.7px;line-height:8.7px;color:#1b3d96;font-weight:bold;">告警处理统计图（30天）</div>
<div style="position:absolute;left:696.3px;top:396.1px;width:15.3px;height:7.8px;border-radius:0.6px;background:#78f59e"></div>
<div class="t" style="left:713.40px;top:396.17px;font-size:7.6px;line-height:7.6px;color:#a6a6a6;">实警</div>
<div style="position:absolute;left:736.0px;top:396.1px;width:15.3px;height:7.8px;border-radius:0.6px;background:#04d8f6"></div>
<div class="t" style="left:753.10px;top:396.17px;font-size:7.6px;line-height:7.6px;color:#a6a6a6;">虚警</div>
<div style="position:absolute;left:776.0px;top:396.1px;width:15.3px;height:7.8px;border-radius:0.6px;background:#38a0f8"></div>
<div class="t" style="left:793.10px;top:396.17px;font-size:7.6px;line-height:7.6px;color:#a6a6a6;">未处理</div>
<svg style="position:absolute;left:1105px;top:378px" width="100" height="18" viewBox="1105 378 100 18"><circle cx="1111" cy="386.6" r="0.8" fill="#8a8a8a"/><circle cx="1115.2" cy="386.6" r="0.8" fill="#8a8a8a"/><circle cx="1119.4" cy="386.6" r="0.8" fill="#8a8a8a"/><rect x="1127.5" y="383.2" width="11.7" height="8" fill="none" stroke="#8a8a8a" stroke-width="1"/><path d="M1127.5 385.2 L1139.2 385.2" stroke="#8a8a8a" stroke-width="1.2"/><path d="M1129.8 381.5 L1129.8 384 M1133.3 381.5 L1133.3 384 M1136.8 381.5 L1136.8 384" stroke="#8a8a8a" stroke-width="0.9"/><path d="M1131 389.6 L1131 390 M1133 387.5 L1133 390 M1135 387.5 L1135 390 M1137 387.5 L1137 390" stroke="#8a8a8a" stroke-width="0.8"/><path d="M1147.2 383.2 L1159.6 383.2 L1159.6 392.3 L1150.5 392.3 L1150.5 380.8" fill="none" stroke="#8a8a8a" stroke-width="1"/><path d="M1169 385.1 L1169 392.3 L1178.6 392.3 L1178.6 383.2 L1170.2 383.2" fill="none" stroke="#8a8a8a" stroke-width="1"/><path d="M1172 381 L1169.6 383.2 L1172 385.4" fill="none" stroke="#8a8a8a" stroke-width="1"/><path d="M1188 387.3 L1188 392.2 L1198.6 392.2 L1198.6 387.3" fill="none" stroke="#8a8a8a" stroke-width="1"/><path d="M1193.3 381 L1193.3 390 M1188.8 385.6 L1193.3 390 L1197.8 385.6" fill="none" stroke="#8a8a8a" stroke-width="1"/></svg>
<div style="position:absolute;left:218.2px;top:633.2px;width:246px;height:16.6px;border:0.8px solid #e4e7ed;border-radius:2px;background:#fff"></div>
<svg style="position:absolute;left:224.5px;top:637.5px" width="10" height="10" viewBox="0 0 10 10"><circle cx="5" cy="5" r="3.9" fill="none" stroke="#c0c4cc" stroke-width="0.8"/><path d="M5 2.8 L5 5 L6.6 5.9" fill="none" stroke="#c0c4cc" stroke-width="0.8"/></svg>
<div class="t" style="left:245.40px;top:638.73px;font-size:8.0px;line-height:8.0px;color:#585858;">2023-06-24 00:00:00</div>
<div class="t" style="left:333.20px;top:639.03px;font-size:8.0px;line-height:8.0px;color:#505050;">至</div>
<div class="t" style="left:354.30px;top:638.73px;font-size:8.0px;line-height:8.0px;color:#585858;">2023-07-01 00:00:00</div>
<div style="position:absolute;left:565.7px;top:633.6px;width:114px;height:16.2px;border:0.8px solid #e4e7ed;border-radius:2px;background:#fff"></div>
<div class="t" style="left:575.00px;top:639.13px;font-size:8px;line-height:8px;color:#c4c6cc;transform:scale(1.03);transform-origin:0 6.77px;">请选择要操作的设备</div>
<div style="position:absolute;left:780px;top:633.6px;width:65px;height:16.4px;border:0.8px solid #e4e7ed;border-radius:2px;background:#fff"></div>
<div class="t" style="left:789.20px;top:639.23px;font-size:8px;line-height:8px;color:#606266;transform:scale(1.07);transform-origin:0 6.77px;">全部类型</div>
<svg style="position:absolute;left:832px;top:639.5px" width="7" height="4" viewBox="0 0 7 4"><path d="M0.6 0.6 L3.5 3.2 L6.4 0.6" fill="none" stroke="#c0c4cc" stroke-width="0.7"/></svg>
<div style="position:absolute;left:946px;top:633.6px;width:94px;height:16.4px;border:0.8px solid #e4e7ed;border-radius:2px;background:#fff"></div>
<div class="t" style="left:955.20px;top:639.23px;font-size:8px;line-height:8px;color:#606266;transform:scale(1.07);transform-origin:0 6.77px;">所有告警</div>
<svg style="position:absolute;left:1026px;top:639.5px" width="7" height="4" viewBox="0 0 7 4"><path d="M0.6 0.6 L3.5 3.2 L6.4 0.6" fill="none" stroke="#c0c4cc" stroke-width="0.7"/></svg>
<div style="position:absolute;left:1141.2px;top:638px;width:34px;height:13.4px;border-radius:2px;background:#409eff"></div>
<div style="position:absolute;left:1182.1px;top:638px;width:48.8px;height:13.4px;border-radius:2px;background:#409eff"></div>
<div style="position:absolute;left:211.6px;top:657.3px;width:1025.4px;height:22.4px;background:#f5f7fa"></div>
<div style="position:absolute;left:211.6px;top:679.7px;width:1025.4px;height:0.8px;background:#ebeef5"></div>
<div class="t" style="left:218.00px;top:664.90px;font-size:7.8px;line-height:7.8px;color:#9a9a9a;">序号</div>
<div class="t" style="left:246.20px;top:664.90px;font-size:7.8px;line-height:7.8px;color:#9a9a9a;">告警抓拍</div>
<div class="t" style="left:347.90px;top:664.90px;font-size:7.8px;line-height:7.8px;color:#9a9a9a;">告警类型</div>
<div class="t" style="left:449.00px;top:664.90px;font-size:7.8px;line-height:7.8px;color:#9a9a9a;">可信度</div>
<div class="t" style="left:549.00px;top:664.90px;font-size:7.8px;line-height:7.8px;color:#9a9a9a;">设备名称</div>
<div class="t" style="left:649.60px;top:664.90px;font-size:7.8px;line-height:7.8px;color:#9a9a9a;">设备号</div>
<div class="t" style="left:750.00px;top:664.90px;font-size:7.8px;line-height:7.8px;color:#9a9a9a;">值班员</div>
<div class="t" style="left:850.00px;top:664.90px;font-size:7.8px;line-height:7.8px;color:#9a9a9a;">通道号</div>
<div class="t" style="left:950.00px;top:664.90px;font-size:7.8px;line-height:7.8px;color:#9a9a9a;">告警时间</div>
<div class="t" style="left:1050.00px;top:664.90px;font-size:7.8px;line-height:7.8px;color:#9a9a9a;">状态</div>
<div class="t" style="left:1151.00px;top:664.90px;font-size:7.8px;line-height:7.8px;color:#9a9a9a;">操作</div>
<div class="t" style="left:219.00px;top:695.17px;font-size:7.6px;line-height:7.6px;color:#6a6c70;">1</div>
<div class="t" style="left:349.00px;top:695.17px;font-size:7.6px;line-height:7.6px;color:#6a6c70;">越界</div>
<div class="t" style="left:449.60px;top:695.17px;font-size:7.6px;line-height:7.6px;color:#6a6c70;">86.6</div>
<div class="t" style="left:649.60px;top:695.17px;font-size:7.6px;line-height:7.6px;color:#6a6c70;">d81601000072</div>
<div class="t" style="left:750.00px;top:695.17px;font-size:7.6px;line-height:7.6px;color:#6a6c70;">test</div>
<div class="t" style="left:850.00px;top:695.17px;font-size:7.6px;line-height:7.6px;color:#6a6c70;">0</div>
<div class="t" style="left:950.00px;top:695.17px;font-size:7.6px;line-height:7.6px;color:#6a6c70;">2023-06-30 22:03:36</div>
<div class="t" style="left:549.60px;top:695.17px;font-size:7.6px;line-height:7.6px;color:#1f3f99;text-decoration:underline;">test</div>
<svg style="position:absolute;left:247.9px;top:685.2px" width="25" height="22.5" viewBox="0 0 25 22.5"><defs><linearGradient id="th1" x1="0" y1="0" x2="0" y2="1"><stop offset="0" stop-color="#b07048"/><stop offset="1" stop-color="#9c5830"/></linearGradient><filter id="thb"><feGaussianBlur stdDeviation="0.35"/></filter></defs><g filter="url(#thb)"><rect width="25" height="22.5" fill="url(#th1)"/><rect x="0" y="0" width="25" height="3.6" fill="#a8a49a"/><rect x="0" y="3.6" width="25" height="6.2" fill="#a4aac4"/><rect x="0" y="9.6" width="25" height="3.6" fill="#b4b48c"/><rect x="0" y="13.2" width="25" height="1.6" fill="#8a7058"/><rect x="5" y="10.2" width="1.6" height="2.6" fill="#5a5a40"/><rect x="17" y="10.2" width="1.6" height="2.6" fill="#5a5a40"/><rect x="21" y="10.2" width="1.6" height="2.6" fill="#5a5a40"/><rect x="4.5" y="0.8" width="2" height="1.6" fill="#505050"/><rect x="17" y="0.8" width="2" height="1.6" fill="#505050"/><rect x="21" y="0.8" width="2" height="1.6" fill="#505050"/><rect x="0" y="0" width="4" height="14.5" fill="#34507e"/><rect x="12.0" y="2.8" width="3" height="7.5" fill="#26305a"/><rect x="12.2" y="10.3" width="2.6" height="5.8" fill="#5a6a88"/><rect x="12.5" y="15.5" width="2.4" height="4" fill="#8a5a3a" opacity="0.6"/></g></svg>
<svg style="position:absolute;left:1050.5px;top:692.6px" width="12" height="12" viewBox="0 0 12 12"><circle cx="6" cy="6.5" r="4" fill="none" stroke="#e04848" stroke-width="0.9"/><path d="M6 4.2 L6 6.7 L7.6 7.6" fill="none" stroke="#e04848" stroke-width="0.9"/><path d="M1.2 3 L3 1.4 M10.8 3 L9 1.4 M3 10.6 L2.2 11.4 M9 10.6 L9.8 11.4" stroke="#e04848" stroke-width="0.9"/></svg>
<div class="t" style="left:1067.00px;top:695.76px;font-size:8.2px;line-height:8.2px;color:#dc4a4a;">超时未处理</div>
<div style="position:absolute;left:1151px;top:690.4px;width:26px;height:17.3px;border-radius:2px;background:#3d95f5"></div>
<svg style="position:absolute;left:1160.7px;top:695.6px" width="7" height="7" viewBox="0 0 7 7"><circle cx="3.5" cy="3.5" r="3.1" fill="#eef4fb"/><path d="M3.9 1.9 L3.1 5.1" stroke="#9ab8d8" stroke-width="0.8"/></svg>
<div style="position:absolute;left:1184px;top:690.4px;width:25.6px;height:17.3px;border-radius:2px;background:#f06767"></div>
<svg style="position:absolute;left:1193.5px;top:695px" width="7" height="8" viewBox="0 0 7 8"><rect x="0.9" y="1.0" width="5.2" height="6.4" fill="none" stroke="#f6c4c4" stroke-width="0.8"/><path d="M2.2 3 L4.8 3" stroke="#f6c4c4" stroke-width="0.6"/></svg>
<div style="position:absolute;left:1243.8px;top:177px;width:6.4px;height:532px;background:#f1f1f1"></div>
<div style="position:absolute;left:1244.4px;top:242.5px;width:5.4px;height:299px;background:#c1c1c1"></div>
<div style="position:absolute;left:1247.3px;top:182px;width:3px;height:38.4px;border-radius:1.5px;background:#4a4f5e"></div>
<svg style="position:absolute;left:1244px;top:700px" width="6" height="6" viewBox="0 0 6 6"><path d="M1.2 2.5 L4.8 2.5 L3 4.6 Z" fill="#505050"/></svg>
<svg style="position:absolute;left:1244px;top:179px" width="6" height="6" viewBox="0 0 6 6"><path d="M1.2 3.5 L4.8 3.5 L3 1.4 Z" fill="#505050"/></svg>
<div style="position:absolute;left:1040.7px;top:592px;width:204px;height:54px;border-radius:5px;background:#fff;box-shadow:0 1px 6px rgba(0,0,0,0.13)"></div>
<svg style="position:absolute;left:1049.5px;top:599.6px" width="14" height="14" viewBox="0 0 14 14"><circle cx="7" cy="6.7" r="6.5" fill="#e6a23c"/><rect x="6.3" y="3" width="1.4" height="4.6" rx="0.5" fill="#fff"/><circle cx="7" cy="9.6" r="0.8" fill="#fff"/></svg>
<div class="t" style="left:1072.50px;top:601.53px;font-size:10px;line-height:10px;color:#303133;font-weight:bold;">告警处理超时!</div>
<svg style="position:absolute;left:1226px;top:601.5px" width="8" height="8" viewBox="0 0 8 8"><path d="M1 1 L7 7 M7 1 L1 7" stroke="#909399" stroke-width="0.9"/></svg>
<div class="t" style="left:1072.00px;top:616.60px;font-size:8.5px;line-height:8.5px;color:#606266;letter-spacing:1.05px;">未&nbsp;佩&nbsp;戴&nbsp;安&nbsp;全&nbsp;帽&nbsp;报&nbsp;警 &nbsp;&nbsp;设&nbsp;备&nbsp;:</div>
<div class="t" style="left:1072.00px;top:628.32px;font-size:8.6px;line-height:8.6px;color:#606266;">d81601000072 通道：2</div>
</body></html>
